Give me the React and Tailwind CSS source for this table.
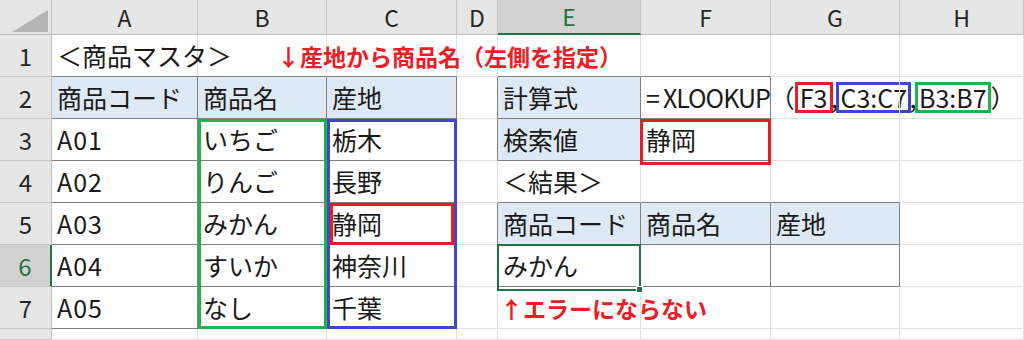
const COLS = ["A", "B", "C", "D", "E", "F", "G", "H"];
const ROWS = [1, 2, 3, 4, 5, 6, 7, 8];

const TEMPLATE =
  "grid grid-cols-[52px_146px_129px_130px_41px_143px_130px_129px_1fr] grid-rows-[35px_repeat(7,42px)_1fr]";

const formula = (
  <span className="whitespace-nowrap">
    <span className="mr-[3px]">=</span>
    <span className="tracking-[-1px]">XLOOKUP</span>（
    <span className="inline-block border-[3px] border-[#ed1c24] leading-[25px] px-[2px]">F3</span>
    <span className="-mx-[1.5px]">,</span>
    <span className="inline-block border-[3px] border-[#3f48cc] leading-[25px] px-[1px]">C3:C7</span>
    <span className="-mx-[1.5px]">,</span>
    <span className="inline-block border-[3px] border-[#22b14c] leading-[25px] px-[1px]">B3:B7</span>）
  </span>
);

const cells = {
  1: { A: "＜商品マスタ＞" },
  2: { A: "商品コード", B: "商品名", C: "産地", E: "計算式", F: formula },
  3: { A: "A01", B: "いちご", C: "栃木", E: "検索値", F: "静岡" },
  4: { A: "A02", B: "りんご", C: "長野", E: "＜結果＞" },
  5: { A: "A03", B: "みかん", C: "静岡", E: "商品コード", F: "商品名", G: "産地" },
  6: { A: "A04", B: "すいか", C: "神奈川", E: "みかん" },
  7: { A: "A05", B: "なし", C: "千葉" },
};

const filled = new Set(["A2", "B2", "C2", "E2", "E3", "E5", "F5", "G5"]);

// cells drawn with the dark table border
function boxed(r, c) {
  const i = COLS.indexOf(c);
  if (r >= 2 && r <= 7 && i >= 0 && i <= 2) return true;
  if (r >= 2 && r <= 3 && (c === "E" || c === "F")) return true;
  if (r >= 5 && r <= 6 && i >= 4 && i <= 6) return true;
  return false;
}

function Cell({ r, c }) {
  const next = COLS[COLS.indexOf(c) + 1];
  const darkRight = boxed(r, c) || (next && boxed(r, next));
  const darkBottom = boxed(r, c) || boxed(r + 1, c);
  const value = cells[r]?.[c];
  const latin = typeof value === "string" && /^[A-Z0-9]+$/.test(value);
  return (
    <div
      className={[
        "flex items-center pl-[5px] border-r border-b whitespace-nowrap overflow-visible min-w-0",
        darkRight ? "border-r-[#7f7f7f]" : "border-r-[#e1e1e1]",
        darkBottom ? "border-b-[#7f7f7f]" : "border-b-[#e1e1e1]",
        filled.has(c + r) ? "bg-[#dde9f5]" : "",
        latin ? "tracking-[1px]" : "",
      ].join(" ")}
    >
      {value}
    </div>
  );
}

function ColHeader({ c }) {
  const selected = c === "E";
  return (
    <div
      className={
        selected
          ? "flex items-center justify-center bg-[#d2d2d2] text-[#217346] border-r border-r-[#c6c6c6] border-b-2 border-b-[#217346]"
          : "flex items-center justify-center bg-[#e6e6e6] text-[#262626] border-r border-r-[#c6c6c6] border-b border-b-[#bdbdbd]"
      }
    >
      <span className="text-[23px] leading-none">{c}</span>
    </div>
  );
}

function RowHeader({ r }) {
  const selected = r === 6;
  return (
    <div
      className={
        selected
          ? "flex items-center justify-center bg-[#d2d2d2] text-[#217346] border-r-2 border-r-[#217346] border-b border-b-[#c6c6c6]"
          : "flex items-center justify-center bg-[#e6e6e6] text-[#262626] border-r border-r-[#bdbdbd] border-b border-b-[#c6c6c6]"
      }
    >
      {r <= 7 && <span className="text-[24px] leading-none">{r}</span>}
    </div>
  );
}

export default function App() {
  return (
    <div
      className="w-[1024px] h-[340px] overflow-hidden bg-white text-[#1a1a1a] text-[25px] grid"
      style={{ fontFamily: '"Noto Sans CJK JP", "Noto Sans", sans-serif' }}
    >
      {/* sheet cells */}
      <div className={`${TEMPLATE} col-start-1 row-start-1 h-[340px]`}>
        <div className="bg-[#e6e6e6] border-r border-r-[#bdbdbd] border-b border-b-[#bdbdbd] flex items-end justify-end pr-[3px] pb-[2px]">
          <svg width="36" height="22" viewBox="0 0 36 22">
            <polygon points="36,0 36,22 0,22" fill="#b4b4b4" />
          </svg>
        </div>
        {COLS.map((c) => (
          <ColHeader key={c} c={c} />
        ))}
        {ROWS.map((r) => (
          <div key={r} className="contents">
            <RowHeader r={r} />
            {COLS.map((c) => (
              <Cell key={c} r={r} c={c} />
            ))}
          </div>
        ))}
      </div>

      {/* range highlights, selection and notes on top */}
      <div className={`${TEMPLATE} col-start-1 row-start-1 h-[340px] z-10 pointer-events-none`}>
        <div className="col-start-3 row-start-4 row-span-5 border-[3px] border-[#22b14c]" />
        <div className="col-start-4 row-start-4 row-span-5 border-[3px] border-[#3f48cc]" />
        <div className="col-start-4 row-start-6 mx-[3px] border-[3px] border-[#ed1c24]" />
        <div className="col-start-7 row-start-4 -ml-[1px] -mb-[4px] border-[3px] border-[#ed1c24]" />
        <div className="col-start-6 row-start-7 -ml-[1px] -mt-[1px] -mb-[4px] border-2 border-[#217346] relative">
          <div className="absolute -right-[4px] -bottom-[4px] w-[7px] h-[7px] bg-[#217346] border border-white" />
        </div>
        <div className="col-start-3 col-span-5 row-start-2 flex items-center pl-[79px] whitespace-nowrap text-[#ee1c25] font-bold text-[23px]">
          ↓産地から商品名（左側を指定）
        </div>
        <div className="col-start-6 col-span-3 row-start-8 flex items-center pl-[2px] whitespace-nowrap text-[#ee1c25] font-bold text-[23px]">
          ↑エラーにならない
        </div>
      </div>
    </div>
  );
}
